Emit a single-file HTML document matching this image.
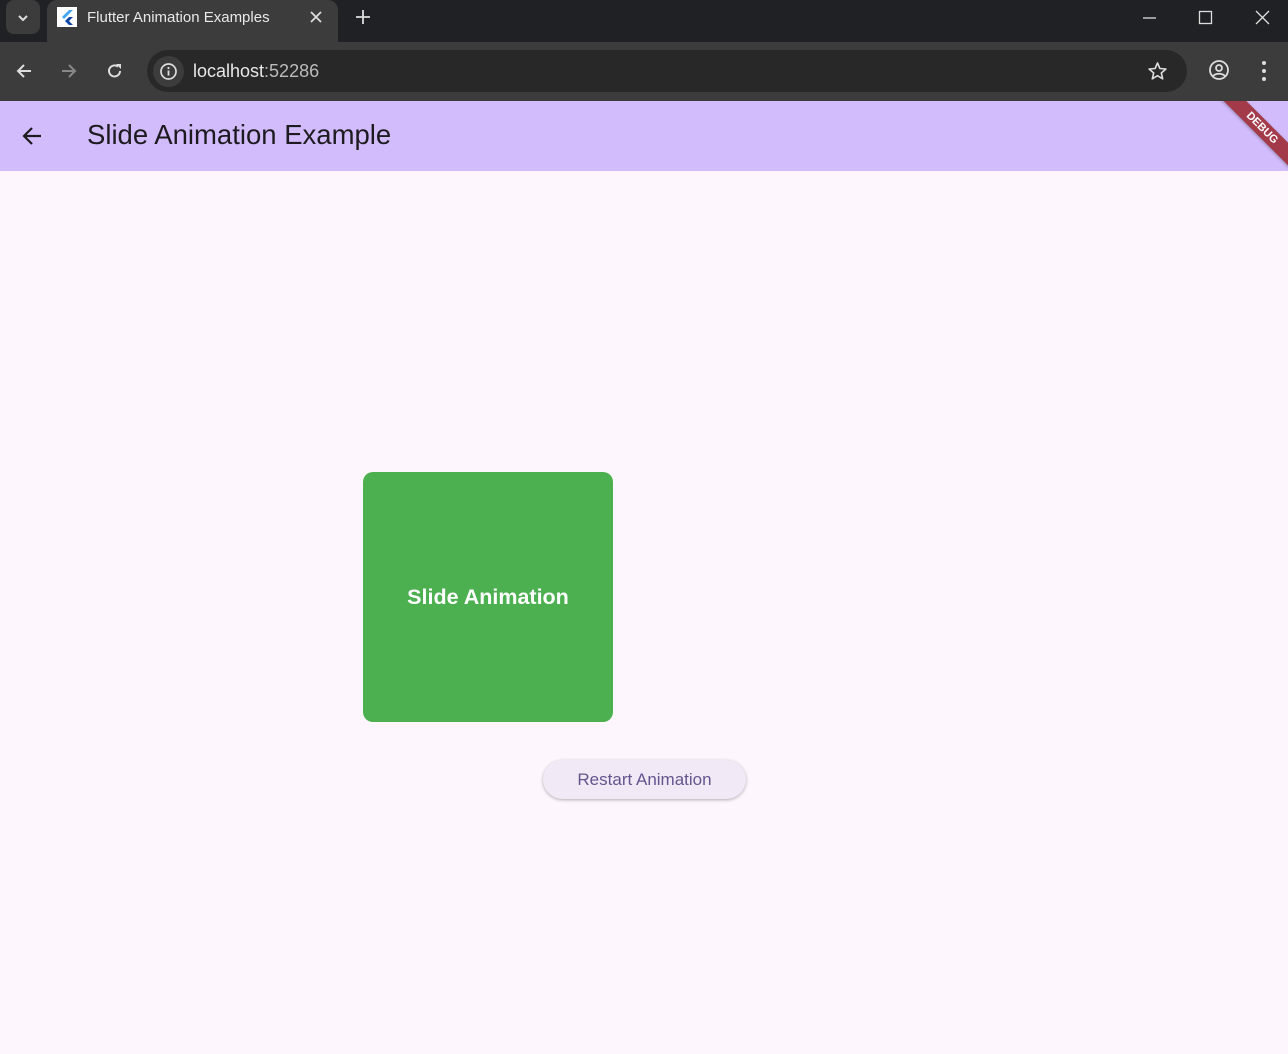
<!DOCTYPE html>
<html><head><meta charset="utf-8"><style>
*{margin:0;padding:0;box-sizing:border-box}
body{width:1288px;height:1054px;overflow:hidden;background:#fdf7fd;font-family:"Liberation Sans",sans-serif;position:relative}
.tabs{position:absolute;left:0;top:0;width:1288px;height:42px;background:#202124}
.tab{position:absolute;left:47px;top:0;width:291px;height:42px;background:#3c3c3c;border-radius:10px 10px 0 0}
.toolbar{position:absolute;left:0;top:42px;width:1288px;height:59px;background:#3c3c3c}
.omni{position:absolute;left:147px;top:50px;width:1040px;height:42px;background:#282828;border-radius:21px}
.appbar{position:absolute;left:0;top:101px;width:1288px;height:70px;background:#d2bcfb;overflow:hidden}
svg{position:absolute}
</style></head><body>
<div class="tabs"></div>
<div style="position:absolute;left:6px;top:0;width:34px;height:34px;background:#3c3c3c;border-radius:8px"></div>
<svg style="left:15px;top:10px" width="16" height="16"><path d="M4 6l4 4 4-4" stroke="#ddd" stroke-width="2" fill="none"/></svg>
<div class="tab"></div>
<div style="position:absolute;left:57px;top:7px;width:20px;height:20px;background:#fff"></div>
<svg style="left:59px;top:9px" width="16" height="16"><path d="M10 1L3 8l2 2 9-9z" fill="#42a5f5"/><path d="M10 8L6 12l4 4h4l-4-4 4-4z" fill="#0d47a1"/></svg>
<div style="position:absolute;left:87px;top:9px;font-size:15px;color:#e8e8e8">Flutter Animation Examples</div>
<svg style="left:309px;top:10px" width="14" height="14"><path d="M2 2l10 10M12 2L2 12" stroke="#ddd" stroke-width="1.8"/></svg>
<svg style="left:355px;top:9px" width="16" height="16"><path d="M8 1v14M1 8h14" stroke="#ddd" stroke-width="1.8"/></svg>
<svg style="left:1142px;top:10px" width="16" height="16"><path d="M1 8h13" stroke="#ddd" stroke-width="1.3"/></svg>
<svg style="left:1198px;top:10px" width="16" height="16"><rect x="1.5" y="1.5" width="12" height="12" fill="none" stroke="#ddd" stroke-width="1.3"/></svg>
<svg style="left:1255px;top:10px" width="16" height="16"><path d="M1 1l13 13M14 1L1 14" stroke="#ddd" stroke-width="1.3"/></svg>
<div class="toolbar"></div>
<svg style="left:14px;top:61px" width="20" height="20"><path d="M17 10H4M10 4l-6 6 6 6" stroke="#ddd" stroke-width="2" fill="none"/></svg>
<svg style="left:59px;top:61px" width="20" height="20"><path d="M3 10h13M10 4l6 6-6 6" stroke="#888" stroke-width="2" fill="none"/></svg>
<svg style="left:105px;top:61px" width="20" height="20"><path d="M15 10a5.5 5.5 0 1 1-2-4.3" stroke="#ddd" stroke-width="2" fill="none"/><path d="M11 3h5v5z" fill="#ddd"/></svg>
<div class="omni"></div>
<div style="position:absolute;left:153px;top:56px;width:31px;height:31px;border-radius:50%;background:#3c3c3c"></div>
<svg style="left:159px;top:62px" width="19" height="19"><circle cx="9.5" cy="9.5" r="7.5" stroke="#ddd" stroke-width="1.7" fill="none"/><path d="M9.5 8.5v5" stroke="#ddd" stroke-width="1.8"/><circle cx="9.5" cy="6" r="1.1" fill="#ddd"/></svg>
<div style="position:absolute;left:193px;top:61px;font-size:18px;color:#e8e8e8">localhost<span style="color:#bbb">:52286</span></div>
<svg style="left:1147px;top:61px" width="21" height="21"><path d="M10.5 2l2.4 5.5 6 .5-4.6 4 1.4 5.8-5.2-3.1-5.2 3.1 1.4-5.8-4.6-4 6-.5z" stroke="#ddd" stroke-width="1.6" fill="none" stroke-linejoin="round"/></svg>
<svg style="left:1208px;top:59px" width="22" height="22"><circle cx="11" cy="11" r="9" stroke="#ddd" stroke-width="1.8" fill="none"/><circle cx="11" cy="9" r="3" stroke="#ddd" stroke-width="1.8" fill="none"/><path d="M5 17c3-3 9-3 12 0" stroke="#ddd" stroke-width="1.8" fill="none"/></svg>
<svg style="left:1260px;top:60px" width="8" height="22"><circle cx="4" cy="3" r="2" fill="#ddd"/><circle cx="4" cy="11" r="2" fill="#ddd"/><circle cx="4" cy="19" r="2" fill="#ddd"/></svg>
<div class="appbar">
<div style="position:absolute;left:1202px;top:19px;width:120px;height:16px;background:#a33a4a;transform:rotate(45deg);color:#fff;font-size:11px;font-weight:bold;text-align:center;line-height:16px;box-shadow:0 1px 3px rgba(0,0,0,.3)">DEBUG</div>
</div>
<svg style="left:20px;top:124px" width="24" height="24"><path d="M21 12H4M12 4l-8 8 8 8" stroke="#1d1b20" stroke-width="2.2" fill="none"/></svg>
<div style="position:absolute;left:87px;top:119px;font-size:27.5px;color:#1d1b20">Slide Animation Example</div>
<div style="position:absolute;left:363px;top:472px;width:250px;height:250px;background:#4caf50;border-radius:10px;color:#fff;font-size:21.5px;font-weight:bold;display:flex;align-items:center;justify-content:center">Slide Animation</div>
<div style="position:absolute;left:543px;top:760px;width:203px;height:39px;border-radius:20px;background:#f1e9f5;box-shadow:0 1px 3px rgba(0,0,0,.3);color:#65558f;font-size:17px;display:flex;align-items:center;justify-content:center">Restart Animation</div>
</body></html>
